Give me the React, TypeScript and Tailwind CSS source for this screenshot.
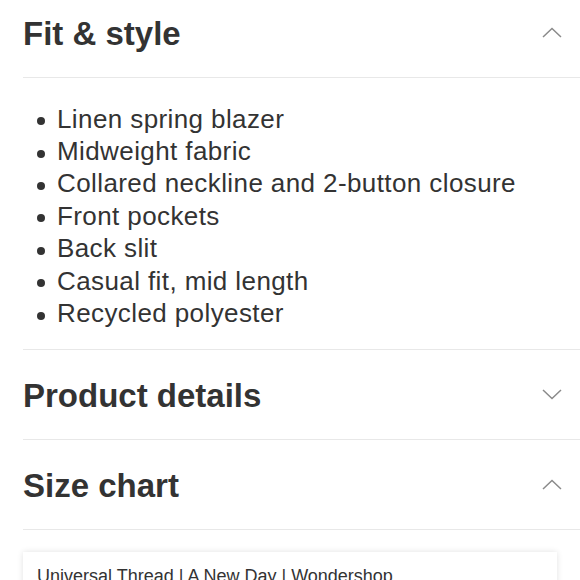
import React from "react";

const Chevron = ({ up }: { up: boolean }) => (
  <svg width="20" height="11" viewBox="0 0 20 11" fill="none" className="shrink-0">
    <polyline
      points={up ? "1,10 10,1.5 19,10" : "1,1 10,9.5 19,1"}
      stroke="#8a8a8a"
      strokeWidth="1.5"
      fill="none"
    />
  </svg>
);

const Header = ({ title, up }: { title: string; up: boolean }) => (
  <div className="h-[90px] flex items-center justify-between pr-[18px] border-b border-[#e8e8e8]">
    <h2 className="text-[33px] leading-none font-bold text-[#333333] mt-[2px]">{title}</h2>
    <Chevron up={up} />
  </div>
);

const items = [
  "Linen spring blazer",
  "Midweight fabric",
  "Collared neckline and 2-button closure",
  "Front pockets",
  "Back slit",
  "Casual fit, mid length",
  "Recycled polyester",
];

export default function App() {
  return (
    <div
      className="w-[580px] h-[580px] overflow-hidden bg-white pl-[23px]"
      style={{ fontFamily: '"Liberation Sans", Arial, sans-serif' }}
    >
      <div className="-mt-[12px]">
        <Header title="Fit & style" up={true} />
        <ul className="pt-[25px] pb-[19px] border-b border-[#e8e8e8]">
          {items.map((t) => (
            <li key={t} className="flex items-center h-[32.4px] text-[26px] text-[#333333] tracking-[0.4px]">
              <span className="w-[8px] h-[8px] rounded-full bg-[#333333] ml-[14px] mr-[12px] mt-[4px] shrink-0" />
              <span>{t}</span>
            </li>
          ))}
        </ul>
        <Header title="Product details" up={false} />
        <Header title="Size chart" up={true} />
        <div className="mt-[22px] w-[534px] bg-white shadow-[0_0_6px_rgba(0,0,0,0.12)] px-[14px] pt-[14px] pb-[20px]">
          <p className="text-[18px] leading-[1.2] text-[#333333]">Universal Thread | A New Day | Wondershop</p>
        </div>
      </div>
    </div>
  );
}
